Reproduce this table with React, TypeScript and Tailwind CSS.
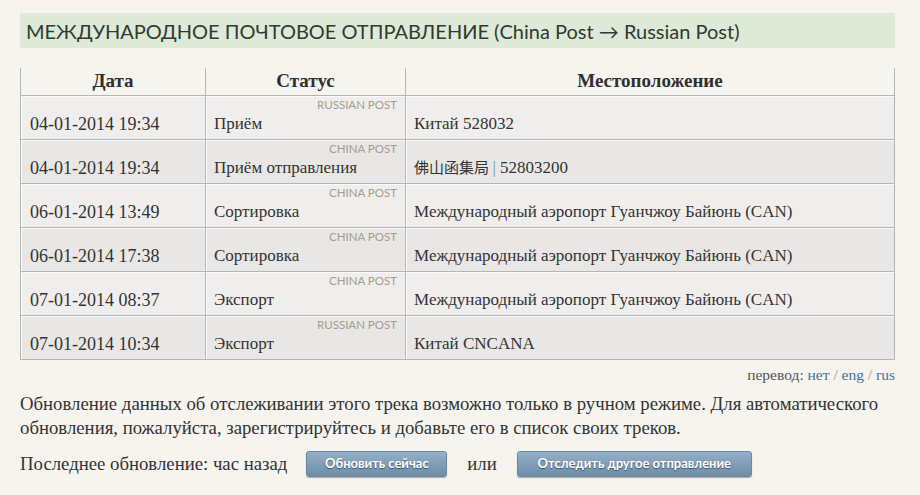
const rows = [
  { date: "04-01-2014 19:34", source: "RUSSIAN POST", status: "Приём", place: "Китай 528032" },
  { date: "04-01-2014 19:34", source: "CHINA POST", status: "Приём отправления", place: "佛山函集局 | 52803200" },
  { date: "06-01-2014 13:49", source: "CHINA POST", status: "Сортировка", place: "Международный аэропорт Гуанчжоу Байюнь (CAN)" },
  { date: "06-01-2014 17:38", source: "CHINA POST", status: "Сортировка", place: "Международный аэропорт Гуанчжоу Байюнь (CAN)" },
  { date: "07-01-2014 08:37", source: "CHINA POST", status: "Экспорт", place: "Международный аэропорт Гуанчжоу Байюнь (CAN)" },
  { date: "07-01-2014 10:34", source: "RUSSIAN POST", status: "Экспорт", place: "Китай CNCANA" },
];

const serif = "font-['Georgia','Liberation_Serif','Noto_Sans_CJK_SC',serif]";

function Place({ text }: { text: string }) {
  if (!text.includes("|")) return <>{text}</>;
  const [a, b] = text.split("|");
  return (
    <>
      <span className="font-['Noto_Sans_CJK_SC',sans-serif] text-[15px]">{a}</span>
      <span className="text-[#6f8fae]">|</span>
      {b}
    </>
  );
}

export default function App() {
  return (
    <div className={`min-h-[495px] w-[920px] bg-[#f6f4ef] pt-[13px] text-[#333] ${serif}`}>
      <div className="mx-[20px] w-[875px]">
        {/* title */}
        <div className="h-[35px] bg-[#dee9d8] pl-[6px] font-['Lato',sans-serif] text-[20px] leading-[37px] text-[#2d3b30]">
          МЕЖДУНАРОДНОЕ ПОЧТОВОЕ ОТПРАВЛЕНИЕ (China Post → Russian Post)
        </div>

        {/* tracking table */}
        <table className="mt-[20px] w-full table-fixed border-collapse">
          <colgroup>
            <col className="w-[185px]" />
            <col className="w-[200px]" />
            <col />
          </colgroup>
          <thead>
            <tr className="h-[27px] text-[19px] font-bold text-[#2f2f2f]">
              <th className="border-x border-b border-[#b5b5b5] align-middle leading-[22px]">Дата</th>
              <th className="border-x border-b border-[#b5b5b5] align-middle leading-[22px]">Статус</th>
              <th className="border-x border-b border-[#b5b5b5] align-middle leading-[22px]">Местоположение</th>
            </tr>
          </thead>
          <tbody>
            {rows.map((r, i) => (
              <tr key={i} className={`h-[44px] text-[17px] ${i % 2 === 0 ? "bg-[#efeeec]" : "bg-[#e8e7e5]"}`}>
                <td className="border border-[#b5b5b5] px-[9px] pb-[4px] align-bottom text-[18px] leading-[22px] shadow-[inset_1px_1px_0_#fbfbfb]">
                  {r.date}
                </td>
                <td className="border border-[#b5b5b5] px-[8px] pb-[4px] align-bottom shadow-[inset_1px_1px_0_#fbfbfb]">
                  <div className="h-[17px] pt-[2px] text-right font-['Lato',sans-serif] text-[11.5px] leading-[14px] text-[#a39c8c]">
                    {r.source}
                  </div>
                  <div className="leading-[22px]">{r.status}</div>
                </td>
                <td className="border border-[#b5b5b5] px-[8px] pb-[4px] align-bottom leading-[22px] shadow-[inset_1px_1px_0_#fbfbfb]">
                  <Place text={r.place} />
                </td>
              </tr>
            ))}
          </tbody>
        </table>

        <div className="mt-[6px] text-right text-[15.5px] leading-[18px] text-[#555]">
          перевод: <span className="text-[#4b7191]">нет</span> <span className="text-[#999]">/</span>{" "}
          <span className="text-[#4b7191]">eng</span> <span className="text-[#999]">/</span>{" "}
          <span className="text-[#4b7191]">rus</span>
        </div>

        <p className="mt-[8px] text-[18.75px] leading-[24px] text-[#333]">
          Обновление данных об отслеживании этого трека возможно только в ручном режиме. Для автоматического обновления,
          пожалуйста, зарегистрируйтесь и добавьте его в список своих треков.
        </p>

        <div className="mt-[10px] flex items-center text-[18.75px]">
          <span>Последнее обновление: час назад</span>
          <button className="ml-[19px] h-[26px] w-[141px] rounded-[3px] border border-[#6a88a3] bg-gradient-to-b from-[#95b0c7] to-[#6c8ca8] font-['Lato',sans-serif] text-[13px] font-bold text-white shadow-[0_1px_1px_rgba(0,0,0,0.3)] [text-shadow:0_1px_1px_rgba(0,0,0,0.45)]">
            Обновить сейчас
          </button>
          <span className="ml-[20px]">или</span>
          <button className="ml-[20px] h-[26px] w-[235px] rounded-[3px] border border-[#6a88a3] bg-gradient-to-b from-[#95b0c7] to-[#6c8ca8] font-['Lato',sans-serif] text-[13px] font-bold text-white shadow-[0_1px_1px_rgba(0,0,0,0.3)] [text-shadow:0_1px_1px_rgba(0,0,0,0.45)]">
            Отследить другое отправление
          </button>
        </div>
      </div>
    </div>
  );
}
